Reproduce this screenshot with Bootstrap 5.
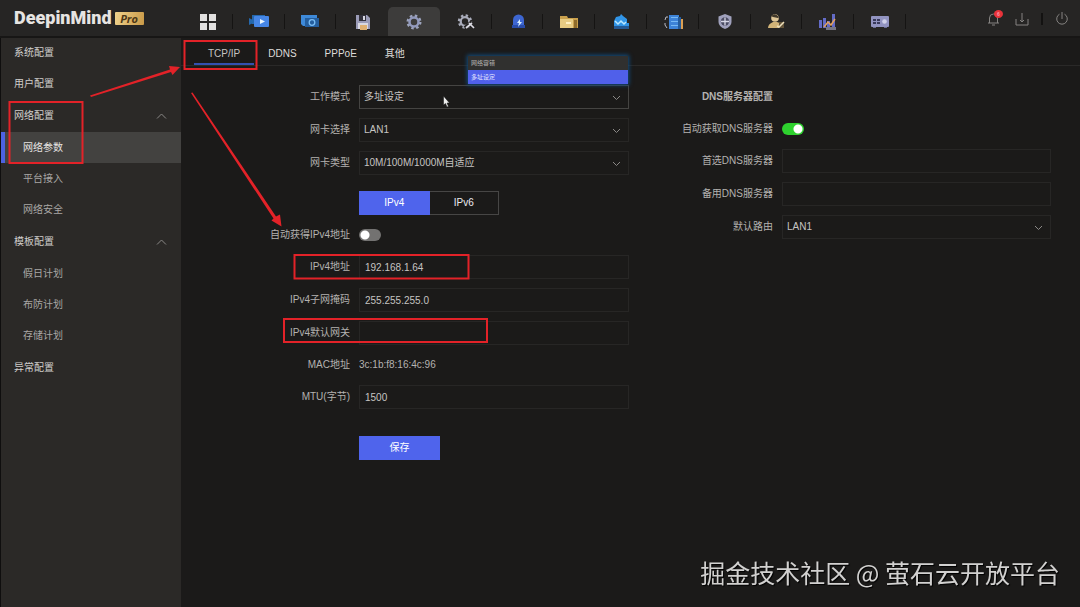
<!DOCTYPE html>
<html lang="zh-CN">
<head>
<meta charset="utf-8">
<meta name="viewport" content="width=device-width, initial-scale=1">
<title>DeepinMind Pro</title>
<link href="https://cdn.jsdelivr.net/npm/bootstrap@5.3.0/dist/css/bootstrap.min.css" rel="stylesheet">
<style>
:root{--chev:url("data:image/svg+xml,%3Csvg xmlns='http://www.w3.org/2000/svg' viewBox='0 0 9 9'%3E%3Cpath d='M1 3 4.500 6.500 8 3' fill='none' stroke='%238a8886' stroke-width='1'/%3E%3C/svg%3E")}
body{background:#1b1a19;color:#b4b2b0;font:10px/14px "Liberation Sans","Noto Sans CJK SC",sans-serif;overflow-x:hidden}
a{color:inherit;text-decoration:none}
.topbar{height:38px;background:#262524;border-bottom:2px solid #171615}
.brand{width:181px;padding-left:14px;gap:3px}
.brand-name{font:900 18px/20px Roboto,sans-serif;color:#e6e4e2}
.brand-pro{font:italic bold 11px/13px "Open Sans",sans-serif;color:#4c3716;background:linear-gradient(100deg,#f0d28c,#c99a48);width:29px;border-radius:1px;text-align:center}
.modules{padding-top:7px}
.modules a{position:relative}
.modules a.active{background:#3d3c3b;border-radius:5px 5px 0 0}
.modules a.sep::after{content:"";position:absolute;right:0;top:7px;height:15px;width:1px;background:#151413}
.modules svg{width:20px;height:18px}
.tools{width:174px;padding:2px 11px 0 0;gap:14px}
.tools button{background:none;border:0;padding:0;color:#858381;line-height:0}
.tools svg{width:14px;height:14px}
.tool-dot{position:absolute;right:-2px;top:-2px;width:9px;height:8px;border-radius:50%;background:#e9333a;font:bold 5px/8px "Liberation Sans",sans-serif;color:#f9a;text-align:center}
.tools .bar{width:2px;height:12px;background:#131211;margin:0 -2px}
.shell{min-height:calc(100vh - 38px)}
.side{width:181px;background:#2b2927;border-left:1px solid #0f0e0e}
.side a{display:flex;align-items:center;justify-content:space-between;height:32px;padding:0 14px 0 13px;color:#d0cecc}
.side a:first-child{height:30px}
.side a svg{width:11px;height:8px}
.side .sub{height:31px;padding-left:22px;color:#a9a7a5}
.side .sub.active{background:#434240;color:#e6e4e2;box-shadow:inset 4px 0 #4d62e2}
.side .sub+a:not(.sub){height:33px}
.tabs{height:28px;border-bottom:1px solid #2a2928;padding-left:13px}
.tabs a{padding:9px 14px 0}
.tabs a{color:#dedcda}
.tabs a.active{box-shadow:inset 0 -2px #3350b0;color:#c6c4c2}
.form-area{display:grid;grid-template-columns:calc(50% + 13px) 1fr;padding:19px 29px 0 0}
.stack{display:flex;flex-direction:column;gap:9px}
.line{display:flex;align-items:center;gap:9px;min-height:24px}
.line.slim{min-height:22px}
.line>.cap{flex:none;width:169px;text-align:right}
.dns .line>.cap{width:144px}
.line.choice{margin:7px 0 0}
.line.save{margin-top:18px}
.fld,.fld:focus{height:24px;min-height:24px;min-width:0;flex:1;background-color:transparent;border:1px solid #272625;border-radius:0;color:#c6c4c2;font:inherit;padding:0 5px;box-shadow:none}
select.fld,select.fld:focus{padding:0 24px 0 4px;background-image:var(--chev);background-size:9px 9px;background-position:right 7px center}
select.fld.open{border-color:#454442}
select option{background:#2b2a29}
.sw{appearance:none;width:22px;height:12px;border-radius:6px;background:radial-gradient(circle at 6px 6px,#fff 4px,transparent 5px) #737271;margin:0}
.sw:checked{background:radial-gradient(circle at 16px 6px,#fff 4px,transparent 5px) #2ed12e}
.seg{width:140px;height:24px}
.seg .btn,.go{font:inherit;border-radius:0;padding:0;line-height:22px;color:#eceaf0;border:1px solid #474645}
.seg .btn-check:checked+.btn,.go,.go:hover{background:#4f64ec;border-color:#4f64ec;color:#fff}
.go{width:81px;height:24px}
.pick{position:relative;display:flex;flex:1;min-width:0}
.pop{position:absolute;right:1px;bottom:25px;width:160px;margin:0;padding:0;list-style:none;background:#30302f;box-shadow:0 0 4px 1px #114e80;font-size:6px;line-height:14px;color:#b5b3b1}
.pop li{padding-left:3px;height:14px}
.pop li.on{background:#5060ea;color:#e3e5ff}
.notes{position:absolute;left:0;top:0;width:1080px;height:607px;pointer-events:none;z-index:5}
.stamp{position:fixed;right:20px;bottom:17px;font:25px/36px "Noto Sans CJK SC",sans-serif;color:#d2d1d0;text-shadow:1px 1px 1px #000;white-space:nowrap}
</style>
</head>
<body>
<header class="topbar d-flex">
  <a href="#" class="brand d-flex align-items-center"><span class="brand-name">DeepinMind</span><span class="brand-pro">Pro</span></a>
  <nav class="modules d-flex flex-grow-1" aria-label="功能模块">
    <a href="#" class="sep d-flex flex-fill w-100 justify-content-center align-items-center" aria-label="主页"><svg viewBox="0 0 20 18"><path fill="#e2e1e0" d="M3 1h7v7H3zM12 1h7v7h-7zM3 10h7v7H3zM12 10h7v7h-7z"/></svg></a>
    <a href="#" class="sep d-flex flex-fill w-100 justify-content-center align-items-center" aria-label="预览"><svg viewBox="0 0 20 18"><path fill="#2568ad" d="m0 5 4 2v3l-4 2zM3 2h13v9H3z"/><rect x="5" y="3" width="15" height="11" rx="1" fill="#4686e6"/><path fill="#eaf6ff" d="m11 6 5 2.500-5 2.500z"/></svg></a>
    <a href="#" class="sep d-flex flex-fill w-100 justify-content-center align-items-center" aria-label="回放"><svg viewBox="0 0 20 18"><path fill="#3e8ad9" d="M1 2h16v11H3l-2-2z"/><path fill="#245e9e" d="M5 5h14v9H5z"/><circle cx="12" cy="9.500" r="2.800" fill="none" stroke="#79bdf5" stroke-width="1.300"/></svg></a>
    <a href="#" class="d-flex flex-fill w-100 justify-content-center align-items-center" aria-label="备份"><svg viewBox="0 0 20 18"><path fill="#9b9cb8" d="M4 2h11l3 3v11H4z"/><path fill="#33323c" d="M7 2h7v6H7z"/><path fill="#d8d8e2" d="M11 3h2v4h-2zM6 10h10v6H6z"/><path fill="#dfb071" d="M8 12h7v5H8z"/></svg></a>
    <a href="#" class="active d-flex flex-fill w-100 justify-content-center align-items-center" aria-label="配置" aria-current="page"><svg viewBox="0 0 20 18"><circle cx="10" cy="9" r="6.300" fill="none" stroke="#9da4bd" stroke-width="2.400" stroke-dasharray="2.500 2.450"/><circle cx="10" cy="9" r="4.500" fill="none" stroke="#9299bc" stroke-width="2.500"/></svg></a>
    <a href="#" class="sep d-flex flex-fill w-100 justify-content-center align-items-center" aria-label="维护"><svg viewBox="0 0 20 18"><circle cx="9" cy="8.500" r="6" fill="none" stroke="#a9acba" stroke-width="2.400" stroke-dasharray="2.350 2.350"/><circle cx="9" cy="8.500" r="4.300" fill="none" stroke="#a9acba" stroke-width="2.300"/><path d="M9 15 16 9" stroke="#262524" stroke-width="4"/><path d="m10 15 6-5m-3 0 5 5" stroke="#dcdce4" stroke-width="1.700"/></svg></a>
    <a href="#" class="sep d-flex flex-fill w-100 justify-content-center align-items-center" aria-label="报警"><svg viewBox="0 0 20 18"><path fill="#3d66d1" d="M5 14V7a5.500 5.500 0 0 1 11 0v7z"/><path fill="#294ca8" d="M4 12h13v3H4z"/><path fill="#d8efff" d="m12 6-3 4h2l-1 4 4-5h-2z"/></svg></a>
    <a href="#" class="sep d-flex flex-fill w-100 justify-content-center align-items-center" aria-label="文件管理"><svg viewBox="0 0 20 18"><path fill="#c9a04d" d="M1 3h7l1 2h10v10H1z"/><path fill="#e8cc83" d="M1 6h13v9H1z"/><path fill="#8f6c2b" d="M15 7h3v8h-3z"/><path fill="#fff1c4" d="M7 9h5v2H7z"/></svg></a>
    <a href="#" class="sep d-flex flex-fill w-100 justify-content-center align-items-center" aria-label="智能分析"><svg viewBox="0 0 20 18"><path fill="#3195e7" d="m10 1 2 2 4 3v4h2v6H3V8l2-4 4-1z"/><path d="m4 8 3 3 3-3 3 3 2-2" fill="none" stroke="#b9e7ff" stroke-width="1.500"/><path fill="#245994" d="M3 13h15v3H3z"/></svg></a>
    <a href="#" class="sep d-flex flex-fill w-100 justify-content-center align-items-center" aria-label="资料库"><svg viewBox="0 0 20 18"><path fill="#3d83d8" d="M6 2h10v14H6z"/><path fill="#77b9f4" d="M8 4h7v1H8zM8 8h7v1H8zM8 12h7v1H8z"/><path fill="#255c9c" d="M15 4h3v12h-3z"/><path fill="#dc9f52" d="M18 6h2v10h-2z"/><path d="M5 4H3L2 7m0 3v2l2 3" fill="none" stroke="#b8bac5"/></svg></a>
    <a href="#" class="sep d-flex flex-fill w-100 justify-content-center align-items-center" aria-label="安全"><svg viewBox="0 0 20 18"><path fill="#a0a1bc" d="m10 1 6.500 2.500V9q0 4.500-6.500 7-6.500-2.500-6.500-7V3.500z"/><circle cx="10" cy="8.500" r="4.200" fill="#4b4c63"/><path d="M10 4.500v8M6 8.500h8" stroke="#d7d7e6" stroke-width="1.300"/></svg></a>
    <a href="#" class="sep d-flex flex-fill w-100 justify-content-center align-items-center" aria-label="人员"><svg viewBox="0 0 20 18"><circle cx="9" cy="5" r="3.800" fill="#dfc797"/><path fill="#d2b478" d="M2 15q0-4 5-6h4q5 1 5 6z"/><path fill="#40382a" d="M5 3q4-4 8 1l-1 1-5-1z"/><path fill="#63543a" d="M13 9h5v6h-5z"/><path d="m11 13 2 1 5-5" stroke="#ede0bb" stroke-width="1.500" fill="none"/></svg></a>
    <a href="#" class="sep d-flex flex-fill w-100 justify-content-center align-items-center" aria-label="统计"><svg viewBox="0 0 20 18"><path fill="#636bc6" d="M1 7h3v8H1zM5 5h3v10H5zM9 8h3v7H9zM14 1h3v14h-3z"/><path d="m6 14 4-5 3 3 4-6" fill="none" stroke="#e5a25d" stroke-width="1.500"/><path fill="#777684" d="M8 14h10v3H8z"/></svg></a>
    <a href="#" class="sep d-flex flex-fill w-100 justify-content-center align-items-center" aria-label="设备"><svg viewBox="0 0 20 18"><rect x="1" y="3" width="18" height="11" rx="1" fill="#9193c0"/><path fill="#38395b" d="M3 6h3v2H3zM7 6h3v2H7zM3 9h3v2H3zM7 9h3v2H7z"/><circle cx="14.500" cy="8.500" r="2.300" fill="#d0d1e9"/><path fill="#696b93" d="M3 14h3v1H3zM14 14h3v1h-3z"/></svg></a>
  </nav>
  <div class="tools d-flex align-items-center justify-content-end">
    <button class="position-relative" aria-label="消息"><svg viewBox="0 0 14 14" fill="none" stroke="currentColor"><path d="M1 11h11M2.500 11V6a4 4 0 0 1 8 0v5M5 13h3"/></svg><span class="tool-dot">6</span></button>
    <button aria-label="下载"><svg viewBox="0 0 14 14" fill="none" stroke="currentColor"><path d="M1 7v6h12V7M7 1v9M5 8l2 2 2-2"/></svg></button>
    <span class="bar"></span>
    <button aria-label="电源"><svg viewBox="0 0 14 14" fill="none" stroke="currentColor"><path d="M4.500 2.200a5.300 5.300 0 1 0 5 0M7 0v7"/></svg></button>
  </div>
</header>
<div class="shell d-flex">
  <nav class="side flex-shrink-0" aria-label="配置菜单">
    <a href="#">系统配置</a>
    <a href="#">用户配置</a>
    <a href="#">网络配置<svg viewBox="0 0 11 8"><path d="m1 6.500 4.500-4.500L10 6.500" fill="none" stroke="#8a8886"/></svg></a>
    <a href="#" class="sub active">网络参数</a>
    <a href="#" class="sub">平台接入</a>
    <a href="#" class="sub">网络安全</a>
    <a href="#">模板配置<svg viewBox="0 0 11 8"><path d="m1 6.500 4.500-4.500L10 6.500" fill="none" stroke="#8a8886"/></svg></a>
    <a href="#" class="sub">假日计划</a>
    <a href="#" class="sub">布防计划</a>
    <a href="#" class="sub">存储计划</a>
    <a href="#">异常配置</a>
  </nav>
  <main class="flex-grow-1">
    <nav class="tabs d-flex"><a href="#" class="active">TCP/IP</a><a href="#">DDNS</a><a href="#">PPPoE</a><a href="#">其他</a></nav>
    <form class="form-area" onsubmit="return false">
      <div class="stack">
        <div class="line"><label class="cap" for="mode">工作模式</label>
          <div class="pick"><select id="mode" class="form-select fld open"><option>多址设定</option><option>网络容错</option></select>
            <ul class="pop"><li>网络容错</li><li class="on">多址设定</li></ul></div></div>
        <div class="line"><label class="cap" for="nic">网卡选择</label><select id="nic" class="form-select fld"><option>LAN1</option></select></div>
        <div class="line"><label class="cap" for="type">网卡类型</label><select id="type" class="form-select fld"><option>10M/100M/1000M自适应</option></select></div>
        <div class="line choice"><span class="cap"></span>
          <div class="seg btn-group" role="group" aria-label="IP 版本">
            <input type="radio" class="btn-check" name="ip" id="v4" checked><label class="btn w-50" for="v4">IPv4</label>
            <input type="radio" class="btn-check" name="ip" id="v6"><label class="btn w-50" for="v6">IPv6</label>
          </div></div>
        <div class="line slim"><label class="cap" for="auto4">自动获得IPv4地址</label><input type="checkbox" role="switch" class="sw" id="auto4"></div>
        <div class="line"><label class="cap" for="addr">IPv4地址</label><input class="form-control fld" id="addr" value="192.168.1.64"></div>
        <div class="line"><label class="cap" for="mask">IPv4子网掩码</label><input class="form-control fld" id="mask" value="255.255.255.0"></div>
        <div class="line"><label class="cap" for="gate">IPv4默认网关</label><input class="form-control fld" id="gate"></div>
        <div class="line slim"><span class="cap">MAC地址</span><span>3c:1b:f8:16:4c:96</span></div>
        <div class="line"><label class="cap" for="mtu">MTU(字节)</label><input class="form-control fld" id="mtu" value="1500"></div>
        <div class="line save"><span class="cap"></span><button class="btn go">保存</button></div>
      </div>
      <div class="stack dns">
        <div class="line"><strong class="cap">DNS服务器配置</strong></div>
        <div class="line slim"><label class="cap" for="autod">自动获取DNS服务器</label><input type="checkbox" role="switch" class="sw" id="autod" checked></div>
        <div class="line"><label class="cap" for="d1">首选DNS服务器</label><input class="form-control fld" id="d1"></div>
        <div class="line"><label class="cap" for="d2">备用DNS服务器</label><input class="form-control fld" id="d2"></div>
        <div class="line"><label class="cap" for="route">默认路由</label><select id="route" class="form-select fld"><option>LAN1</option></select></div>
      </div>
    </form>
  </main>
</div>
<!-- Tutorial marks: boxes, arrows and the pointer -->
<svg class="notes" viewBox="0 0 1080 607" aria-hidden="true">
  <g fill="none" stroke="#e32228" stroke-width="2">
    <rect x="184.500" y="41" width="72" height="28"/>
    <rect x="9.500" y="102" width="73" height="61"/>
    <rect x="294.500" y="255" width="174" height="23.500"/>
    <rect x="284" y="319" width="203" height="23"/>
  </g>
  <path fill="#e32228" d="m90 95.500 1 1.500 80-25 1.500 3 7.500-8-11-1 1 3.500zM191 93l1.500-.500 83.500 124 4-2 1.500 12-10-6 2-2z"/>
  <path fill="#eee" stroke="#111" stroke-width=".5" d="M443.500 96v9l2-1.500 1.500 3.500 1.500-.500-1.500-3.500h2.500z"/>
</svg>
<div class="stamp">掘金技术社区 @ 萤石云开放平台</div>
<script src="https://cdn.jsdelivr.net/npm/bootstrap@5.3.0/dist/js/bootstrap.bundle.min.js"></script>
</body>
</html>
